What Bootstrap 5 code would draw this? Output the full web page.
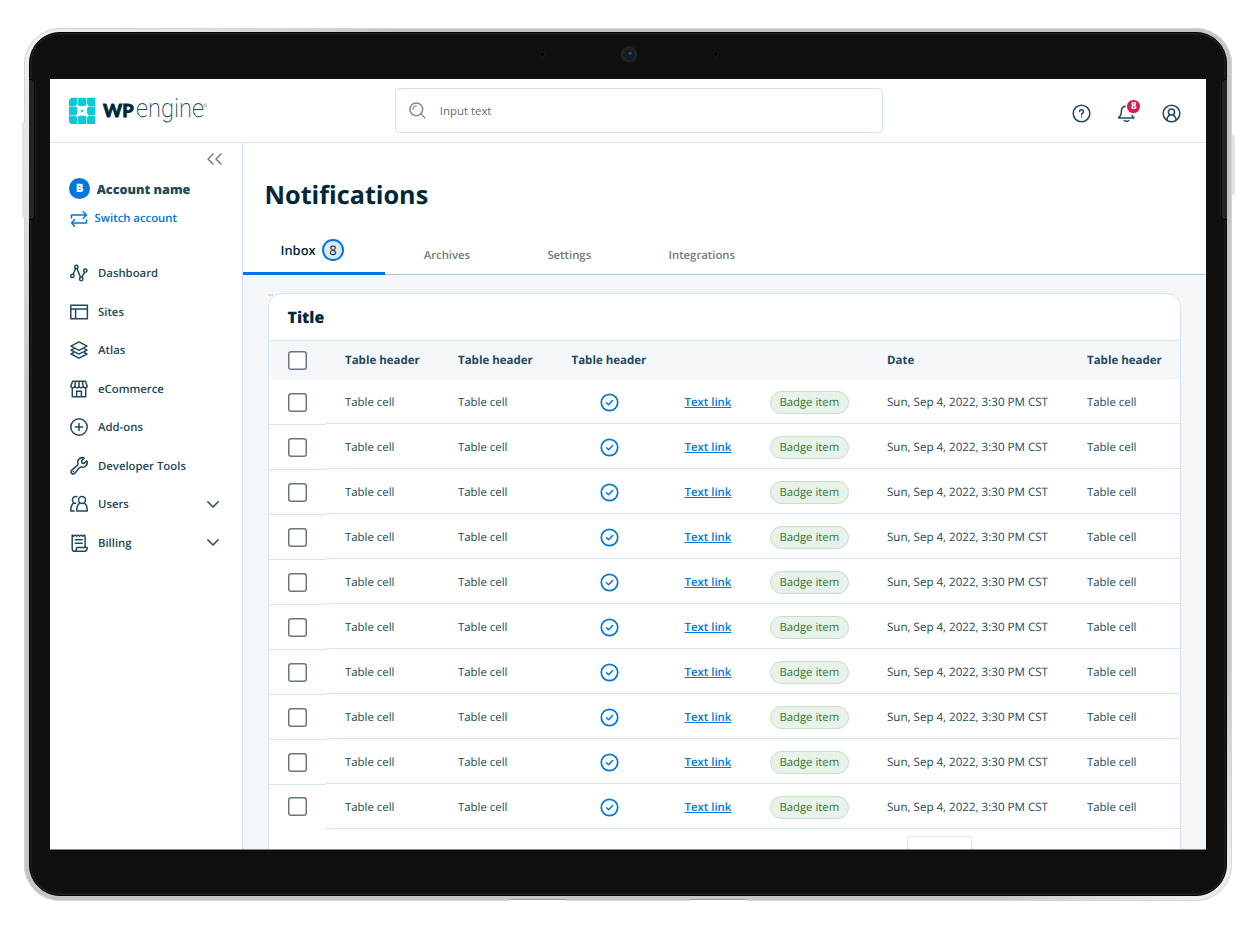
<!DOCTYPE html>
<html lang="en">
<head>
<meta charset="utf-8">
<meta name="viewport" content="width=device-width, initial-scale=1">
<title>Notifications</title>
<link href="https://cdn.jsdelivr.net/npm/bootstrap@5.3.0/dist/css/bootstrap.min.css" rel="stylesheet">
<style>
:root{--ink:#002838;--text:#21495a;--line:#d6e4ee;--blue:#0077e0;--pale:#f3f7fa}
body{font-family:"Open Sans",sans-serif;font-size:11.4px;line-height:16px;color:var(--text);background:#fff;overflow:hidden;text-rendering:geometricPrecision}
svg{display:block;flex:none;overflow:visible}
.line-icon{fill:none;stroke:currentColor;stroke-width:1.5;stroke-linecap:round;stroke-linejoin:round}

/* tablet body */
.tablet{width:1208px;height:873px;margin:28px 0 0 24px;padding:4px 5px 5px;border-radius:36px;background:linear-gradient(135deg,#f0f0f0 0,#e2e2e2 8%,#c4c4c4 18%,#c4c4c4 88%,#ececec 98%)}
.tablet::before{content:"";position:absolute;inset:0;border-radius:36px;border:1px solid #d6d6d6}
.bezel{height:864px;border-radius:31px;background:#0f0f0f;border:1px solid #000;box-shadow:inset 0 0 0 1.5px #202122;padding:46px 20px 0}
.screen{width:1156px;height:771px;background:#fff;border-bottom:1px solid #858687;overflow:hidden}
.side-key{width:3px;background:#e3e3e3}
.key-l{left:-2px;top:94px;height:96px;border-radius:2px 0 0 2px}
.key-r{right:-3px;top:107px;height:60px;border-radius:0 2px 2px 0}
.rail{width:6px;height:141px;top:51px;background:#232425;border:1px solid #040404;box-shadow:0 0 0 1px #1b1b1b}
.rail-l{left:5px;border-radius:0 4px 4px 0;border-left:0;clip-path:inset(-2px -2px -2px 0)}
.rail-r{right:5px;border-radius:4px 0 0 4px;border-right:0;clip-path:inset(-2px 0 -2px -2px)}
.cams{left:514px;top:17px}
.foot{width:58px;height:2px;bottom:0;background:#fff;border-top:1px solid #9c9c9c;border-radius:3px 3px 0 0}
.foot-a{left:485px}.foot-b{left:665px}

/* top bar */
.topbar{height:64px;border-bottom:1px solid var(--line);padding:0 25.4px 0 19px}
.logo-cell{width:325.5px}
.search{width:488px;height:45px;border:1px solid #d5e2ec;border-radius:5px;padding:0 0 0 13px;color:#6b7880}
.search .form-control{font-size:11.4px;padding:0;height:20px;margin-left:14.3px}
.search .form-control::placeholder{color:#5d6c75;opacity:1}
.tools{gap:26px;padding-top:5px}
.count-dot{width:12.8px;height:12.8px;left:10.8px;top:-3.2px;font-size:9.8px;line-height:12.8px;background:#d81b4c}

/* side navigation */
.sidenav{width:193px;border-right:1px solid #c8dcea;font-weight:600}
.collapse-row{height:32px;padding-right:20px;color:#747f86}
.acct{height:28px;padding:0 0 1px 19px;gap:6.7px;font-size:12.65px;font-weight:800;color:#21495a}
.avatar{width:21px;height:21px;font-size:11.5px;background:var(--blue)}
.switch{height:30px;padding:2.4px 0 0 19.6px;gap:7px;color:var(--blue);font-size:11.3px}
.switch svg{margin-top:-1px}
.side-menu{margin-top:20.7px}
.side-menu .nav-link{height:38.57px;padding:2.2px 23px 0 19.6px;gap:10.4px;color:var(--text);font-size:11.35px}
.side-menu .nav-link svg{margin-top:-2.2px}

/* page head */
.content-pane{width:963px;background:var(--pale)}
.pagehead{height:132px;background:#fff;border-bottom:1px solid #a9c4de}
.pagehead h1{font-size:25.2px;font-weight:700;line-height:34px;color:var(--ink);padding:34.5px 0 0 21.6px;margin:0;height:91px}
.tabs .nav-link{height:41px;padding:2.6px 38.7px 0;color:#6f7b82;font-weight:600;font-size:11.3px}
.tabs .nav-link.active{width:142px;padding:0 0 5.6px 37.5px;border-bottom:3px solid var(--blue);color:var(--ink);font-size:12.9px;gap:6.5px}
.tally{width:21.5px;height:21.5px;border:2px solid var(--blue);background:#dbe9f6;font-weight:400;font-size:13px}

/* table card */
.inbox-card{width:913px;height:600px;margin:18px 0 0 25px;border:1px solid var(--line);border-radius:14px 14px 0 0;background:#fff}
.inbox-card h2{height:47px;font-size:15.9px;font-weight:800;line-height:47px;color:var(--ink);padding-left:18.5px;margin:0;border-bottom:1px solid var(--line)}
.smudge{left:-1px;top:0;width:5px;height:2px;background:#dcdcde}
.grid{table-layout:fixed;width:911px;--bs-table-bg:transparent}
.grid>:not(caption)>*>*{padding:1.6px 0 0 19px;border:0;color:var(--text);white-space:nowrap;vertical-align:middle}
.grid thead th{height:38px;background:var(--pale);font-weight:700;font-size:11.5px}
.grid>tbody>tr>td{height:45px;padding-top:3px;box-shadow:inset 0 -1px 0 var(--line)}
.grid>tbody>tr>td:first-child{box-shadow:0 1px 0 var(--line);padding-top:1px}
.grid>tbody>tr:last-child>td:first-child{box-shadow:none;padding-top:0}
.grid>thead>tr>th:first-child{padding-top:0}
.grid .date-cell{font-size:11.58px}
.grid .form-check-input{width:19px;height:19px;margin:0;border:0;box-shadow:inset 0 0 0 1.5px #6b757d;border-radius:3px;display:block;background:#fff}
.grid a{color:var(--blue);font-weight:600;font-size:11.4px;text-decoration-thickness:1px;text-underline-offset:1px}
.check{color:var(--blue);margin:-2px 0 0 28px}
.pill{height:23px;padding:0 8.4px;border:1px solid #c5dfc6;background:#e9f2ea;color:#35792f;font-size:11.35px;margin-top:-2px;vertical-align:middle}
.pill span{padding-top:1px}
.pager{width:65px;height:20px;margin:7px 0 0 638px;border:1px solid #e3e8ec;border-radius:2px}
</style>
</head>
<body>
<div class="tablet position-relative">
  <span class="side-key key-l position-absolute"></span>
  <span class="side-key key-r position-absolute"></span>
  <div class="bezel">
    <div class="screen">

      <header class="topbar d-flex align-items-center">
        <div class="logo-cell">
          <svg width="140" height="28" viewBox="0 0 140 28">
            <path fill="#0ecad4" d="M2.200.7h6.200v8.200H0V2.900zM9.100.7h8.300v8.200H9.100zM18.100.7h8.300v8.200h-8.300zM0 9.600h8.400v8.300H0zM9.100 9.600h8.300v8.300H9.100zM18.100 9.600h8.300v8.300h-8.300zM0 18.600h8.400v8.300H2l-2-1.800zM9.100 18.600h8.300v8.300H9.100zM18.100 18.600h6.800l1.500 1.200v7.100h-8.300z"/>
            <path fill="#fff" d="M6.800 8.600l1.200-1.100 2.900 1.700q2.300.8 4.600 0l2.900-1.700 1.200 1.100-1.500 2.900q-.9 2.200 0 4.500l1.500 2.900-1.200 1.200-2.900-1.700q-2.300-.8-4.600 0L8 20.100l-1.200-1.200L8.300 16q.9-2.300 0-4.500z"/>
            <circle cx="13.200" cy="13.700" r="1.300" fill="#0ecad4"/>
            <text x="34" y="19.500" font-family="Lato" font-weight="900" font-size="18" fill="#002838" stroke="#002838" stroke-width=".8" textLength="30.500" lengthAdjust="spacingAndGlyphs">WP</text>
            <text x="67" y="19.800" font-family="Roboto" font-weight="200" font-size="26" fill="#21495a" textLength="68" lengthAdjust="spacingAndGlyphs">engine</text>
            <circle cx="136.200" cy="8.200" r="1.300" fill="none" stroke="#8398a2" stroke-width=".8"/>
          </svg>
        </div>
        <div class="search d-flex align-items-center">
          <svg class="line-icon" width="17" height="17" viewBox="0 0 17 17" style="stroke:#818b91"><circle cx="7.300" cy="7.300" r="6.400"/><path d="M12 12l4 4M3.900 7.300a3.400 3.400 0 0 1 3.400-3.400" stroke-width="1.200"/></svg>
          <input class="form-control border-0 bg-transparent shadow-none" placeholder="Input text" aria-label="Search">
        </div>
        <div class="tools d-flex align-items-center ms-auto">
          <svg class="line-icon" width="19" height="19" viewBox="0 0 19 19"><circle cx="9.500" cy="9.500" r="8.300"/><path d="M7.600 7.600a1.900 1.900 0 1 1 2.700 1.700c-.6.300-.8.600-.8 1.400M9.500 12.900v.2"/></svg>
          <div class="position-relative">
            <svg class="line-icon" width="19" height="19" viewBox="0 0 19 19"><path d="M8.200 2.200C5.600 2.600 4.400 4.400 4.400 7c0 3.500-.9 5.100-2.600 6.200v.8h15v-.6c-.8-.4-1.400-1-1.800-1.900M7.200 16.500c1.300.9 3.300.9 4.600 0"/></svg>
            <span class="count-dot position-absolute rounded-circle text-white text-center fw-bold">8</span>
          </div>
          <svg class="line-icon" width="19" height="19" viewBox="0 0 19 19"><circle cx="9.500" cy="9.500" r="8.300"/><circle cx="9.500" cy="8" r="3.100"/><path d="M4.900 16c.2-2.700 1.500-4.300 3-4.900M14.100 16c-.2-2.700-1.500-4.300-3-4.900"/></svg>
        </div>
      </header>

      <div class="d-flex">
        <aside class="sidenav">
          <div class="collapse-row d-flex align-items-center justify-content-end">
            <svg class="line-icon" width="16" height="12" viewBox="0 0 16 12" style="stroke-linecap:butt"><path d="M7.500.5L2 6l5.500 5.500M15.500.5L10 6l5.500 5.500"/></svg>
          </div>
          <div class="acct d-flex align-items-center"><span class="avatar rounded-circle text-white d-flex align-items-center justify-content-center">B</span>Account name</div>
          <a href="#" class="switch d-flex align-items-center text-decoration-none">
            <svg class="line-icon" width="18" height="16" viewBox="0 0 18 16"><path d="M1.500 7V4h15M13.300.8L16.500 4l-3.200 3.200M16.500 9v3H1.500M4.700 8.800L1.500 12l3.200 3.200"/></svg>Switch account</a>
          <nav class="side-menu nav flex-column flex-nowrap">
            <a href="#" class="nav-link d-flex align-items-center"><svg class="line-icon" width="18" height="18" viewBox="0 0 18 18"><circle cx="2.400" cy="11.900" r="1.700"/><circle cx="6.300" cy="2.900" r="1.700"/><circle cx="11.200" cy="15" r="1.700"/><circle cx="15.300" cy="6.600" r="1.700"/><path d="M3.100 10.300l2.500-5.800M6.900 4.500l3.700 8.900M11.900 13.400l2.700-5.200"/></svg>Dashboard</a>
            <a href="#" class="nav-link d-flex align-items-center"><svg class="line-icon" width="18" height="18" viewBox="0 0 18 18"><path d="M.8 2.200h16.600v13.600H.8zM.8 5.900h16.600M5.600 5.900v9.900"/></svg>Sites</a>
            <a href="#" class="nav-link d-flex align-items-center"><svg class="line-icon" width="18" height="18" viewBox="0 0 18 18"><path d="M9 .9l8 4.200-8 4.200-8-4.200zM3.500 7.800L1 9.100l8 4.100 8-4.100-2.500-1.300M3.500 11.800L1 13l8 4.100 8-4.100-2.500-1.200"/></svg>Atlas</a>
            <a href="#" class="nav-link d-flex align-items-center"><svg class="line-icon" width="18" height="18" viewBox="0 0 18 18"><path d="M2.600 1.300h12.800L17.200 6c0 1-.9 1.700-2 1.700S13.200 7 13.200 6c0 1-1 1.700-2.100 1.700S9 7 9 6c0 1-1 1.700-2.100 1.700S4.800 7 4.800 6c0 1-.9 1.700-2 1.700S.8 7 .8 6zM5.600 1.300L4.800 6M9 1.300V6M12.400 1.300l.8 4.700M2.300 7.800v8.900h13.400V7.800M6.600 16.500v-5.200h4.800v5.200"/></svg>eCommerce</a>
            <a href="#" class="nav-link d-flex align-items-center"><svg class="line-icon" width="18" height="18" viewBox="0 0 18 18"><circle cx="9" cy="9" r="8.200"/><path d="M9 5.400v7.200M5.400 9h7.200"/></svg>Add-ons</a>
            <a href="#" class="nav-link d-flex align-items-center"><svg class="line-icon" width="18" height="18" viewBox="0 0 18 18"><path d="M14.300 1.200A4.500 4.500 0 0 0 8 6.700c.1.700-.1 1.200-.6 1.700l-5.900 5a2.200 2.200 0 0 0 3.100 3.100l5-5.900c.5-.5 1-.7 1.700-.6a4.500 4.500 0 0 0 5.500-6.200l-2.700 2.600-2.100-.4-.4-2.200zM3.200 14.800h.1"/></svg>Developer Tools</a>
            <a href="#" class="nav-link d-flex align-items-center"><svg class="line-icon" width="18" height="18" viewBox="0 0 18 18"><circle cx="12" cy="5.100" r="3.500"/><path d="M9.800 8.200c-2.200 1.300-3.100 4-3.100 7.700h10.600c0-3.700-.9-6.400-3.100-7.700M6.800 1.700C4.600 1 2.400 2.600 2.400 5c0 1.300.6 2.300 1.600 3-2 .9-3.200 3.500-3.200 7.900h3.400M4 8.200h1.600"/></svg>Users
              <svg class="line-icon ms-auto" width="12" height="7" viewBox="0 0 12 7"><path d="M.8.8L6 6l5.200-5.200"/></svg></a>
            <a href="#" class="nav-link d-flex align-items-center"><svg class="line-icon" width="18" height="18" viewBox="0 0 18 18"><path d="M2.200 1l1.400 1.300L5.100 1l1.500 1.300L8.100 1l1.500 1.300L11.100 1l1.500 1.300L14.200 1l.9 1v11.300M2.200 1v14c0 1.400.8 2.200 2 2.200h10.500c1.500 0 2.500-1.300 2.500-3.700H6.600c0 2.600-.8 3.700-2.400 3.700M5.300 5.800h6.900M5.300 9.300h6.900"/></svg>Billing
              <svg class="line-icon ms-auto" width="12" height="7" viewBox="0 0 12 7"><path d="M.8.8L6 6l5.200-5.200"/></svg></a>
          </nav>
        </aside>

        <main class="content-pane">
          <div class="pagehead">
            <h1>Notifications</h1>
            <nav class="tabs nav">
              <a href="#" class="nav-link active d-flex align-items-center">Inbox<span class="tally rounded-circle d-flex align-items-center justify-content-center">8</span></a>
              <a href="#" class="nav-link d-flex align-items-center">Archives</a>
              <a href="#" class="nav-link d-flex align-items-center">Settings</a>
              <a href="#" class="nav-link d-flex align-items-center">Integrations</a>
            </nav>
          </div>
          <section class="inbox-card position-relative">
            <span class="smudge position-absolute"></span>
            <h2>Title</h2>
            <table class="grid table mb-0">
              <colgroup><col style="width:57px"><col style="width:113px"><col style="width:113.500px"><col style="width:113px"><col style="width:85.500px"><col style="width:117px"><col style="width:200px"><col style="width:112px"></colgroup>
              <thead><tr><th><input class="form-check-input" type="checkbox" aria-label="Select all"></th><th>Table header</th><th>Table header</th><th>Table header</th><th></th><th></th><th>Date</th><th>Table header</th></tr></thead>
              <tbody id="rows"></tbody>
            </table>
            <div class="pager"></div>
          </section>
        </main>
      </div>
    </div>
  </div>
  <span class="rail rail-l position-absolute"></span>
  <span class="rail rail-r position-absolute"></span>
  <svg class="cams position-absolute" width="182" height="20" viewBox="0 0 182 20">
    <circle cx="4" cy="9" r="2.500" fill="#000" stroke="#1d1d1d"/><circle cx="177.500" cy="9" r="2.500" fill="#000" stroke="#1d1d1d"/>
    <circle cx="91" cy="9.500" r="8.300" fill="#222325"/><circle cx="91" cy="9.500" r="5.500" fill="#1a1b1e"/><circle cx="91.500" cy="9.300" r="3.300" fill="#0b2038"/><circle cx="92.300" cy="8.300" r="1.500" fill="#1c4f8a"/>
  </svg>
  <span class="foot foot-a position-absolute"></span>
  <span class="foot foot-b position-absolute"></span>
</div>

<template id="row">
  <tr>
    <td><input class="form-check-input" type="checkbox" aria-label="Select row"></td>
    <td>Table cell</td>
    <td>Table cell</td>
    <td><svg class="line-icon check" width="19" height="19" viewBox="0 0 19 19"><circle cx="9.500" cy="9.500" r="8.200" stroke-width="1.700"/><path d="M6.400 9.800l2.200 2 4-4.300" stroke-width="1.500"/></svg></td>
    <td><a href="#">Text link</a></td>
    <td><span class="pill rounded-pill d-inline-flex align-items-center"><span>Badge item</span></span></td>
    <td class="date-cell">Sun, Sep 4, 2022, 3:30 PM CST</td>
    <td>Table cell</td>
  </tr>
</template>
<script src="https://cdn.jsdelivr.net/npm/bootstrap@5.3.0/dist/js/bootstrap.bundle.min.js"></script>
<script>
  const rows = document.getElementById('rows');
  const row = document.getElementById('row');
  for (let i = 0; i < 10; i++) rows.append(row.content.cloneNode(true));
</script>
</body>
</html>
